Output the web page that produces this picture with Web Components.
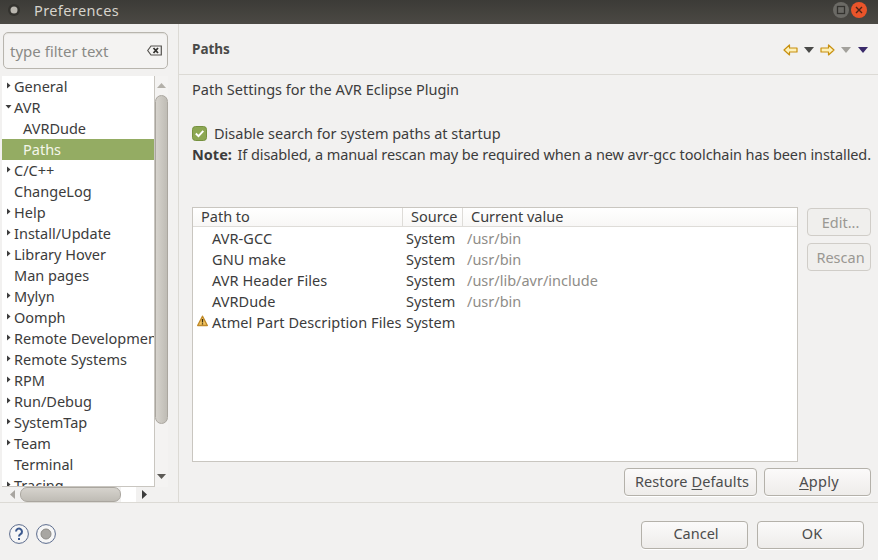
<!DOCTYPE html>
<html>
<head>
<meta charset="utf-8">
<title>Preferences</title>
<style>
  html, body { margin: 0; height: 100%; }
  body { font: 14.5px "Noto Sans", "Open Sans", sans-serif; color: #3c3c3c; background: #f2f1f0; overflow: hidden; }
</style>
</head>
<body>
<pref-window>
  <title-bar slot="title">Preferences</title-bar>
  <pref-tree slot="tree"></pref-tree>
  <paths-page slot="page"></paths-page>
  <dialog-foot slot="foot"></dialog-foot>
</pref-window>

<script>
class PrefWindow extends HTMLElement {
  constructor() {
    super();
    this.attachShadow({ mode: 'open' }).innerHTML = `
      <style>
        :host { display: grid; width: 878px; height: 560px; grid-template-rows: 24px 479px 57px; grid-template-columns: 878px; }
        .mid { display: grid; grid-template-columns: 178px 1px 699px; border-bottom: 1px solid #dcdad5; }
        .sash { background: #dcdad5; }
      </style>
      <div><slot name="title"></slot></div>
      <div class="mid">
        <div><slot name="tree"></slot></div>
        <div class="sash"></div>
        <div><slot name="page"></slot></div>
      </div>
      <div><slot name="foot"></slot></div>
    `;
  }
}

class TitleBar extends HTMLElement {
  constructor() {
    super();
    this.attachShadow({ mode: 'open' }).innerHTML = `
      <style>
        :host { display: flex; align-items: flex-start; height: 24px; box-sizing: border-box; padding: 2px 11px 0 8px; background: linear-gradient(#3c3b37, #4b4944); color: #d6d3cc; font-size: 14.5px; }
        .dot { width: 12px; height: 12px; margin: 2px 14px 0 0; }
        .text { flex: 1; letter-spacing: .4px; line-height: 16px; }
        svg { display: block; }
        .btns { display: flex; gap: 2px; }
      </style>
      <svg class="dot" viewBox="0 0 12 12"><circle cx="6" cy="6" r="6" fill="#33322e"/><circle cx="6" cy="6" r="3.5" fill="#b9b6af"/></svg>
      <span class="text"><slot></slot></span>
      <div class="btns">
        <svg width="16" height="16" viewBox="0 0 16 16"><circle cx="8" cy="8" r="8" fill="#6b6a65"/><rect x="4.5" y="4.5" width="7" height="7" fill="none" stroke="#33322e" stroke-width="1.3"/></svg>
        <svg width="16" height="16" viewBox="0 0 16 16"><circle cx="8" cy="8" r="8" fill="#e9542a"/><path d="M5 5l6 6M11 5l-6 6" stroke="#4b2417" stroke-width="1.4"/></svg>
      </div>
    `;
  }
}

class TreeRow extends HTMLElement {
  constructor() {
    super();
    this.attachShadow({ mode: 'open' }).innerHTML = `
      <style>
        :host { display: flex; align-items: center; height: 21px; box-sizing: border-box; padding: 0 0 2px 3px; white-space: nowrap; color: #3c3c3c; }
        :host([sel]) { background: #94ac63; color: #f4f6ea; }
        :host([child]) { padding-left: 21px; }
        .tw { width: 9px; height: 9px; flex: none; }
        :host([child]) .tw { display: none; }
      </style>
      <svg class="tw" viewBox="0 0 9 9"></svg><slot></slot>
    `;
  }
  connectedCallback() {
    const a = this.getAttribute('arrow');
    const svg = this.shadowRoot.querySelector('svg');
    if (a === 'right') svg.innerHTML = '<path d="M2 1.5l3.5 3-3.5 3z" fill="#3c3c3c"/>';
    if (a === 'down') svg.innerHTML = '<path d="M0.5 3h6l-3 3.5z" fill="#3c3c3c"/>';
  }
}

const treeData = [
  ['General', 'right'], ['AVR', 'down'], ['AVRDude', '', 1], ['Paths', '', 1, 1], ['C/C++', 'right'],
  ['ChangeLog', ''], ['Help', 'right'], ['Install/Update', 'right'], ['Library Hover', 'right'],
  ['Man pages', ''], ['Mylyn', 'right'], ['Oomph', 'right'], ['Remote Development', 'right'],
  ['Remote Systems', 'right'], ['RPM', 'right'], ['Run/Debug', 'right'], ['SystemTap', 'right'],
  ['Team', 'right'], ['Terminal', ''], ['Tracing', 'right']
];

class PrefTree extends HTMLElement {
  constructor() {
    super();
    const rows = treeData.map(([t, a, c, s]) =>
      `<tree-row arrow="${a}"${c ? ' child' : ''}${s ? ' sel' : ''}>${t}</tree-row>`).join('');
    this.attachShadow({ mode: 'open' }).innerHTML = `
      <style>
        :host { display: block; height: 478px; padding: 8px 10px 0 2px; box-sizing: border-box; }
        .filter { display: flex; align-items: center; height: 37px; margin-left: 1px; padding: 0 5px 0 6px; box-sizing: border-box; border: 1px solid #b8b5ae; border-radius: 5px; background: #f4f3f2; color: #8a8a86; font-size: 15px; box-shadow: inset 0 1px 1px #e2e0dc; }
        .filter span { flex: 1; }
        .box { display: grid; grid-template-columns: 153px 13px; grid-template-rows: 411px 15px; margin-top: 7px; }
        .rows { background: #fff; overflow: hidden; box-sizing: border-box; border-right: 1px solid #c9c6c0; border-bottom: 1px solid #c9c6c0; }
        .vbar { display: flex; flex-direction: column; align-items: center; background: #f4f3f2; }
        .up { height: 19px; flex: none; display: flex; align-items: center; }
        .vthumb { width: 13px; height: 329px; flex: none; border-radius: 7px; background: linear-gradient(90deg, #d6d3cd, #bfbcb5); border: 1px solid #aaa69f; box-sizing: border-box; }
        .spacer { flex: 1; }
        .down { height: 21px; display: flex; align-items: center; }
        .hbar { display: flex; align-items: center; background: #f2f1f0; height: 15px; }
        .hthumb { width: 101px; height: 15px; border-radius: 7px; background: linear-gradient(#d6d3cd, #bfbcb5); border: 1px solid #aaa69f; box-sizing: border-box; flex: none; }
        .larr { width: 18px; flex: none; padding-left: 8px; box-sizing: border-box; height: 15px; display: flex; align-items: center; }
        .rarr { width: 19px; flex: none; padding-left: 6px; box-sizing: border-box; height: 15px; display: flex; align-items: center; }
        .fill { flex: 1; background: #fff; height: 15px; }
        svg { display: block; }
      </style>
      <div class="filter"><span>type filter text</span>
        <svg width="15" height="11" viewBox="0 0 15 11"><path d="M0.7 5.5L4 1h10.3v9H4z" fill="#f4f3f2" stroke="#55534f" stroke-width="1.2"/><path d="M6.5 3l4.500 5M11 3L6.500 8" stroke="#33322f" stroke-width="1.8"/></svg>
      </div>
      <div class="box">
        <div class="rows">${rows}</div>
        <div class="vbar">
          <div class="up"><svg width="9" height="5" viewBox="0 0 9 5"><path d="M4.500 0L9 5H0z" fill="#b3b0a9"/></svg></div>
          <div class="vthumb"></div>
          <div class="spacer"></div>
          <div class="down"><svg width="9" height="5" viewBox="0 0 9 5"><path d="M0 0h9L4.500 5z" fill="#5c5a56"/></svg></div>
        </div>
        <div class="hbar">
          <div class="larr"><svg width="5" height="9" viewBox="0 0 5 9"><path d="M5 0v9L0 4.500z" fill="#a8a5a0"/></svg></div>
          <div class="hthumb"></div>
          <div class="fill"></div>
          <div class="rarr"><svg width="5" height="9" viewBox="0 0 5 9"><path d="M0 0v9l5-4.500z" fill="#3c3c3c"/></svg></div>
        </div>
      </div>
    `;
  }
}

class PushButton extends HTMLElement {
  constructor() {
    super();
    this.attachShadow({ mode: 'open' }).innerHTML = `
      <style>
        :host { display: flex; align-items: center; justify-content: center; box-sizing: border-box; height: 28px; padding: 0 0 3px 3px; border: 1px solid #b4b1aa; border-radius: 4px; background: linear-gradient(#fbfafa, #eeecea); color: #4c4c4c; white-space: nowrap; box-shadow: 0 1px 0 #fff; }
        :host([disabled]) { padding-bottom: 1px; background: #f0efed; border-color: #d0cdc8; color: #9a9893; box-shadow: none; }
      </style>
      <slot></slot>
    `;
  }
}

const pathRows = [
  ['AVR-GCC', 'System', '/usr/bin'],
  ['GNU make', 'System', '/usr/bin'],
  ['AVR Header Files', 'System', '/usr/lib/avr/include'],
  ['AVRDude', 'System', '/usr/bin'],
  ['Atmel Part Description Files', 'System', '', true]
];

class PathTable extends HTMLElement {
  constructor() {
    super();
    const warn = `<svg class="warn" width="11" height="12" viewBox="0 0 11 12"><path d="M5.500 1.200L10.300 10.500H.7z" fill="#f3c560" stroke="#c08a2a" stroke-width="1.400" stroke-linejoin="round"/><path d="M5.500 4v3.400M5.500 8.300v1.200" stroke="#3c2f10" stroke-width="1.300"/></svg>`;
    const rows = pathRows.map(([a, b, c, w]) => `
      <div class="row">
        <div class="c1">${w ? warn : ''}<span>${a}</span></div>
        <div class="c2">${b}</div>
        <div class="c3">${c}</div>
      </div>`).join('');
    this.attachShadow({ mode: 'open' }).innerHTML = `
      <style>
        :host { display: block; box-sizing: border-box; width: 606px; height: 255px; border: 1px solid #c9c6c0; background: #fff; overflow: hidden; }
        .head { display: grid; grid-template-columns: 210px 60px 1fr; height: 18px; line-height: 17px; background: linear-gradient(#fff, #f8f7f6); border-bottom: 1px solid #dedcd8; }
        .head div { padding-left: 8px; border-right: 1px solid #dedcd8; box-sizing: border-box; }
        .head div:last-child { border-right: 0; }
        .rows { padding-top: 1px; }
        .row { display: grid; grid-template-columns: 213px 57px 1fr; height: 21px; line-height: 20px; white-space: nowrap; }
        .c1 { position: relative; padding-left: 19px; letter-spacing: .07px; }
        .warn { position: absolute; left: 4px; top: 3px; }
        .c3 { color: #8f8d88; padding-left: 4px; }
      </style>
      <div class="head"><div>Path to</div><div>Source</div><div>Current value</div></div>
      <div class="rows">${rows}</div>
    `;
  }
}

class PathsPage extends HTMLElement {
  constructor() {
    super();
    this.attachShadow({ mode: 'open' }).innerHTML = `
      <style>
        :host { display: flex; flex-direction: column; height: 478px; box-sizing: border-box; }
        .head { display: flex; align-items: center; justify-content: space-between; height: 51px; flex: none; padding: 0 10px 1px 13px; border-bottom: 1px solid #dcdad5; box-sizing: border-box; font-weight: 700; font-size: 13.5px; color: #4a4a48; }
        .nav { display: flex; align-items: center; gap: 6px; margin-top: 2px; }
        svg { display: block; flex: none; }
        .body { flex: 1; padding: 4px 7px 0 13px; display: flex; flex-direction: column; }
        .desc { height: 20px; line-height: 20px; }
        .check { display: flex; align-items: center; margin-top: 24px; height: 20px; gap: 7px; }
        .note { height: 20px; line-height: 20px; margin-top: 1px; white-space: nowrap; letter-spacing: -.1px; }
        .note b { margin-right: 2px; letter-spacing: 0; }
        .tablewrap { display: flex; gap: 9px; margin-top: 43px; }
        .side { display: flex; flex-direction: column; gap: 7px; width: 64px; margin-top: 1px; }
        .actions { display: flex; justify-content: flex-end; gap: 7px; margin-top: 6px; }
        push-button.r { width: 133px; letter-spacing: .1px; }
        push-button.a { width: 107px; letter-spacing: .3px; }
        u { text-underline-offset: 2px; }
      </style>
      <div class="head">
        <span>Paths</span>
        <div class="nav">
          <svg width="15" height="12" viewBox="0 0 15 12"><path d="M1 6L6.500 1v3h7.500v4H6.500v3z" fill="#fdf0b8" stroke="#c8900f" stroke-width="1.200" stroke-linejoin="round"/></svg>
          <svg width="10" height="6" viewBox="0 0 10 6"><path d="M0 0h10L5 6z" fill="#4a4a48"/></svg>
          <svg width="15" height="12" viewBox="0 0 15 12"><path d="M14 6L8.500 1v3H1v4h7.500v3z" fill="#fdf0b8" stroke="#c8900f" stroke-width="1.200" stroke-linejoin="round"/></svg>
          <svg width="10" height="6" viewBox="0 0 10 6"><path d="M0 0h10L5 6z" fill="#a3a19c"/></svg>
          <svg style="margin-left:1px" width="10" height="6" viewBox="0 0 10 6"><path d="M0 0h10L5 6z" fill="#3a2a6a"/></svg>
        </div>
      </div>
      <div class="body">
        <div class="desc">Path Settings for the AVR Eclipse Plugin</div>
        <div class="check">
          <svg width="15" height="15" viewBox="0 0 15 15"><rect x=".5" y=".5" width="14" height="14" rx="3" fill="#8ca752" stroke="#76913f"/><path d="M3.800 7.500l2.700 2.700 4.800-5.400" fill="none" stroke="#fff" stroke-width="1.900"/></svg>
          <span>Disable search for system paths at startup</span>
        </div>
        <div class="note"><b>Note:</b> If disabled, a manual rescan may be required when a new avr-gcc toolchain has been installed.</div>
        <div class="tablewrap">
          <path-table></path-table>
          <div class="side">
            <push-button disabled>Edit...</push-button>
            <push-button disabled>Rescan</push-button>
          </div>
        </div>
        <div class="actions">
          <push-button class="r"><span>Restore <u>D</u>efaults</span></push-button>
          <push-button class="a"><span><u>A</u>pply</span></push-button>
        </div>
      </div>
    `;
  }
}

class DialogFoot extends HTMLElement {
  constructor() {
    super();
    this.attachShadow({ mode: 'open' }).innerHTML = `
      <style>
        :host { display: flex; align-items: center; height: 57px; padding: 6px 14px 0 9px; box-sizing: border-box; gap: 7px; }
        svg { display: block; margin-top: -1px; }
        .sp { flex: 1; }
        push-button { width: 107px; }
        push-button + push-button { margin-left: 2px; }
      </style>
      <svg width="20" height="20" viewBox="0 0 20 20"><circle cx="10" cy="10" r="9.400" fill="#f6f6f6" stroke="#5a6a8c" stroke-width="1"/><path d="M7 7.500a3 3 0 1 1 4.500 2.700c-1 .6-1.500 1-1.500 2.300" fill="none" stroke="#3d5a8f" stroke-width="2"/><rect x="9" y="14" width="2" height="2" fill="#3d5a8f"/></svg>
      <svg width="20" height="20" viewBox="0 0 20 20"><circle cx="10" cy="10" r="9.400" fill="#f6f6f6" stroke="#5a6a8c" stroke-width="1"/><circle cx="10" cy="10" r="5" fill="#a8a6a2" stroke="#8d8b87"/></svg>
      <div class="sp"></div>
      <push-button>Cancel</push-button>
      <push-button>OK</push-button>
    `;
  }
}

customElements.define('pref-window', PrefWindow);
customElements.define('title-bar', TitleBar);
customElements.define('tree-row', TreeRow);
customElements.define('pref-tree', PrefTree);
customElements.define('push-button', PushButton);
customElements.define('path-table', PathTable);
customElements.define('paths-page', PathsPage);
customElements.define('dialog-foot', DialogFoot);
</script>
</body>
</html>
